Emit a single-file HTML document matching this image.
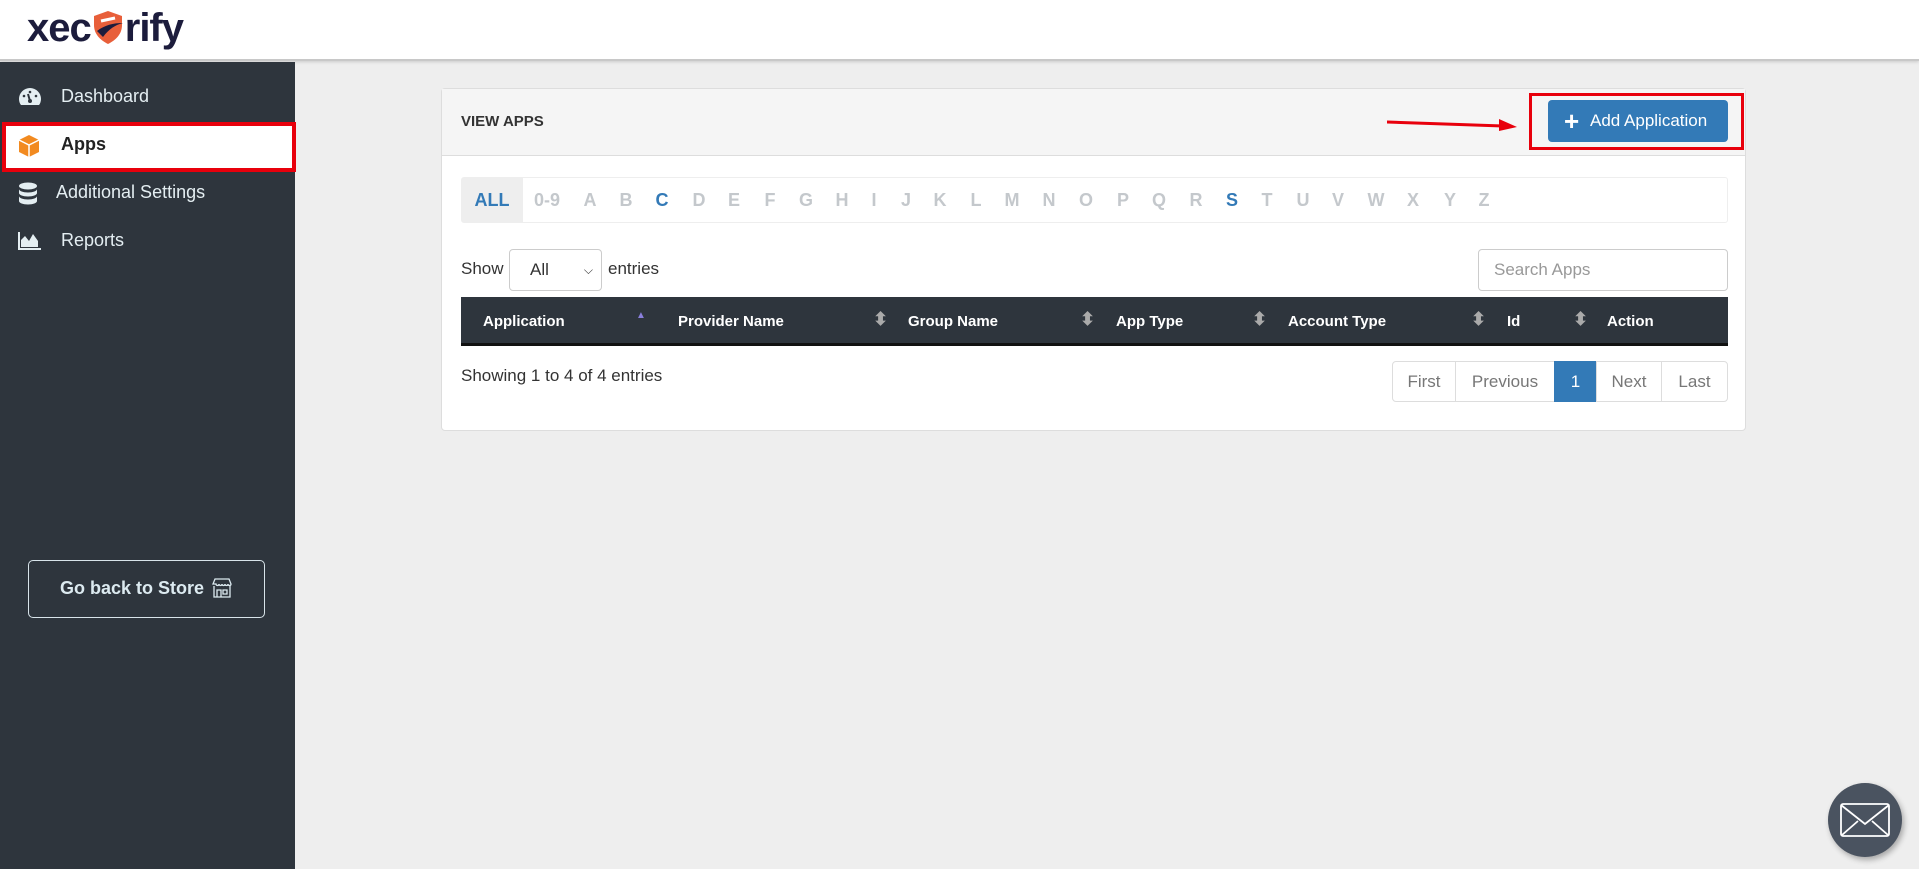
<!DOCTYPE html>
<html><head><meta charset="utf-8"><style>
*{box-sizing:border-box;margin:0;padding:0}
body{width:1919px;height:869px;overflow:hidden;background:#eeeeee;font-family:"Liberation Sans",Arial,sans-serif;position:relative;color:#333}
.hdr{position:absolute;left:0;top:0;width:1919px;height:61px;background:#fff;border-bottom:2px solid #c8c8c8;box-shadow:0 1px 3px rgba(0,0,0,.15)}
.logo{position:absolute;left:27px;top:6px;font-size:40px;font-weight:bold;color:#1c1c3c;letter-spacing:-1px}
.side{position:absolute;left:0;top:62px;width:295px;height:807px;background:#2e353d}
.nav{position:absolute;left:0;width:295px;color:#e4eef2;font-size:18px}
.nav span{position:absolute;left:61px}
.ico{position:absolute;left:18px}
.apps{position:absolute;left:2px;top:60px;width:294px;height:50px;background:#fff;border:4px solid #e8000c}
.store{position:absolute;left:28px;top:560px;width:237px;height:58px;border:1.5px solid #d8e4ea;border-radius:5px;color:#dceaf0;font-weight:bold;font-size:18px;line-height:55px;padding-left:31px}
.panel{position:absolute;left:441px;top:88px;width:1305px;height:343px;background:#fff;border:1px solid #ddd;border-radius:4px}
.ph{height:67px;background:#f5f5f5;border-bottom:1px solid #ddd}
.abs{position:absolute}
.alpha{position:absolute;left:19px;top:88px;width:1267px;height:46px;border:1px solid #eee;border-radius:3px}
.alpha b{position:absolute;top:12px;font-size:18px;color:#c4c8cc;transform:translateX(-50%)}
.th{position:absolute;left:19px;top:208px;width:1267px;height:49px;background:#2e353d;border-bottom:3px solid #111;color:#fff;font-weight:bold;font-size:15px}
.th span{position:absolute;top:16px}
.pg{position:absolute;top:272px;height:41px;border:1px solid #ddd;margin-left:-1px;color:#777;font-size:17px;line-height:39px;text-align:center}
</style></head><body>
<div class="hdr"><div class="logo">xec<svg width="34" height="36" viewBox="0 0 34 36" style="vertical-align:-4px"><path d="M17 2l14 5v9c0 9-6 15-14 19C9 31 3 25 3 16V7z" fill="#e85f3a"/><path d="M6 22c8-6 16-8 26-8-8 2-14 6-20 14z" fill="#1c1c3c"/><path d="M10 12l14-3" stroke="#fff" stroke-width="3"/></svg>rify</div></div>
<div class="side">
 <div class="nav" style="top:24px"><svg class="ico" width="24" height="22" viewBox="0 0 24 22"><path d="M12 2a11 11 0 0 0-11 11c0 2.5.8 4.6 2 6h18c1.2-1.4 2-3.5 2-6A11 11 0 0 0 12 2z" fill="#e4eef2"/><circle cx="12" cy="15" r="2" fill="#2e353d"/><path d="M12 15l-2-7" stroke="#2e353d" stroke-width="2"/><circle cx="6" cy="10" r="1.3" fill="#2e353d"/><circle cx="18" cy="10" r="1.3" fill="#2e353d"/><circle cx="12" cy="6" r="1.3" fill="#2e353d"/></svg><span>Dashboard</span></div>
 <div class="apps"></div>
 <div class="nav" style="top:72px;color:#222;font-weight:bold"><svg class="ico" width="22" height="24" viewBox="0 0 22 24"><path d="M11 1l10 5v12l-10 5-10-5V6z" fill="#f28a20"/><path d="M1 6l10 5 10-5M11 11v12" stroke="#fff" stroke-width="1.5" fill="none"/></svg><span>Apps</span></div>
 <div class="nav" style="top:120px"><svg class="ico" width="20" height="24" viewBox="0 0 20 24"><ellipse cx="10" cy="4" rx="9" ry="3.5" fill="#e4eef2"/><path d="M1 7c0 2 4 3.5 9 3.5s9-1.5 9-3.5v4c0 2-4 3.5-9 3.5S1 13 1 11zM1 14c0 2 4 3.5 9 3.5s9-1.5 9-3.5v5c0 2-4 3.5-9 3.5S1 21 1 19z" fill="#e4eef2"/></svg><span style="left:56px">Additional Settings</span></div>
 <div class="nav" style="top:168px"><svg class="ico" width="24" height="20" viewBox="0 0 24 20"><path d="M1 2v17h22" stroke="#e4eef2" stroke-width="2" fill="none"/><path d="M3 17V10l4-4 4 5 4-7 5 7v6z" fill="#e4eef2"/></svg><span>Reports</span></div>
 <div class="store" style="top:498px">Go back to Store <svg width="22" height="22" viewBox="0 0 22 22" style="position:absolute;left:182px;top:16px"><path d="M2 7l2-5h14l2 5c0 2-3 2-3 0 0 2-3 2-3 0 0 2-3 2-3 0 0 2-3 2-3 0 0 2-3 2-3 0z M3 9v11h16V9 M6 20v-7h4v7 M12 13h4v4h-4z" stroke="#dceaf0" stroke-width="1.3" fill="none"/></svg></div>
</div>
<div class="panel">
 <div class="ph"></div>
 <div class="abs" style="left:19px;top:24px;font-weight:bold;font-size:15px;color:#333">VIEW APPS</div>
 <svg class="abs" style="left:945px;top:28px" width="132" height="14"><path d="M0 5l116 4" stroke="#e8000c" stroke-width="3"/><path d="M112 2l18 8-18 4z" fill="#e8000c"/></svg>
 <div class="abs" style="left:1087px;top:4px;width:215px;height:57px;border:3px solid #e8000c"></div>
 <div class="abs" style="left:1106px;top:11px;width:180px;height:42px;background:#337ab7;border-radius:4px;color:#fff;font-size:17px;line-height:42px;padding-left:42px"><span style="position:absolute;left:16px;top:0;font-size:26px;font-weight:bold">+</span>Add Application</div>
 <div class="alpha"><div class="abs" style="left:0;top:0;width:61px;height:44px;background:#eee"></div>
 <b style="left:30px;color:#337ab7">ALL</b><b style="left:85px">0-9</b><b style="left:128px">A</b><b style="left:164px">B</b><b style="left:200px;color:#337ab7">C</b><b style="left:237px">D</b><b style="left:272px">E</b><b style="left:308px">F</b><b style="left:344px">G</b><b style="left:380px">H</b><b style="left:412px">I</b><b style="left:444px">J</b><b style="left:478px">K</b><b style="left:514px">L</b><b style="left:550px">M</b><b style="left:587px">N</b><b style="left:624px">O</b><b style="left:661px">P</b><b style="left:697px">Q</b><b style="left:734px">R</b><b style="left:770px;color:#337ab7">S</b><b style="left:805px">T</b><b style="left:841px">U</b><b style="left:876px">V</b><b style="left:914px">W</b><b style="left:951px">X</b><b style="left:988px">Y</b><b style="left:1022px">Z</b></div>
 <div class="abs" style="left:19px;top:170px;font-size:17px">Show</div>
 <div class="abs" style="left:67px;top:160px;width:93px;height:42px;border:1px solid #ccc;border-radius:4px;font-size:17px;line-height:40px;padding-left:20px">All<span style="position:absolute;right:8px;font-size:12px">&#x2335;</span></div>
 <div class="abs" style="left:166px;top:170px;font-size:17px">entries</div>
 <div class="abs" style="left:1036px;top:160px;width:250px;height:42px;border:1px solid #ccc;border-radius:4px;font-size:17px;line-height:40px;padding-left:15px;color:#999">Search Apps</div>
 <div class="th"><span style="left:22px">Application</span><span style="left:175px;top:13px;font-size:10px;color:#8a7fdc">&#9650;</span><span style="left:217px">Provider Name</span><span style="left:412px;color:#aaa;top:12px;font-size:18px">&#x2B0D;</span><span style="left:447px">Group Name</span><span style="left:619px;color:#aaa;top:12px;font-size:18px">&#x2B0D;</span><span style="left:655px">App Type</span><span style="left:791px;color:#aaa;top:12px;font-size:18px">&#x2B0D;</span><span style="left:827px">Account Type</span><span style="left:1010px;color:#aaa;top:12px;font-size:18px">&#x2B0D;</span><span style="left:1046px">Id</span><span style="left:1112px;color:#aaa;top:12px;font-size:18px">&#x2B0D;</span><span style="left:1146px">Action</span></div>
 <div class="abs" style="left:19px;top:277px;font-size:17px">Showing 1 to 4 of 4 entries</div>
 <div class="pg" style="left:951px;width:64px;border-radius:4px 0 0 4px">First</div>
 <div class="pg" style="left:1014px;width:100px">Previous</div>
 <div class="pg" style="left:1113px;width:43px;background:#337ab7;border-color:#337ab7;color:#fff">1</div>
 <div class="pg" style="left:1155px;width:66px">Next</div>
 <div class="pg" style="left:1220px;width:67px;border-radius:0 4px 4px 0">Last</div>
</div>
<div class="abs" style="left:1828px;top:783px;width:74px;height:74px;border-radius:50%;background:#4a5360;box-shadow:2px 3px 6px rgba(0,0,0,.3)"><svg width="74" height="74" viewBox="0 0 74 74"><rect x="13" y="21" width="48" height="32" rx="2" stroke="#fff" stroke-width="1.8" fill="none"/><path d="M13 22l24 19 24-19M14 52l16-14M60 52L44 38" stroke="#fff" stroke-width="1.8" fill="none"/></svg></div>
</body></html>
